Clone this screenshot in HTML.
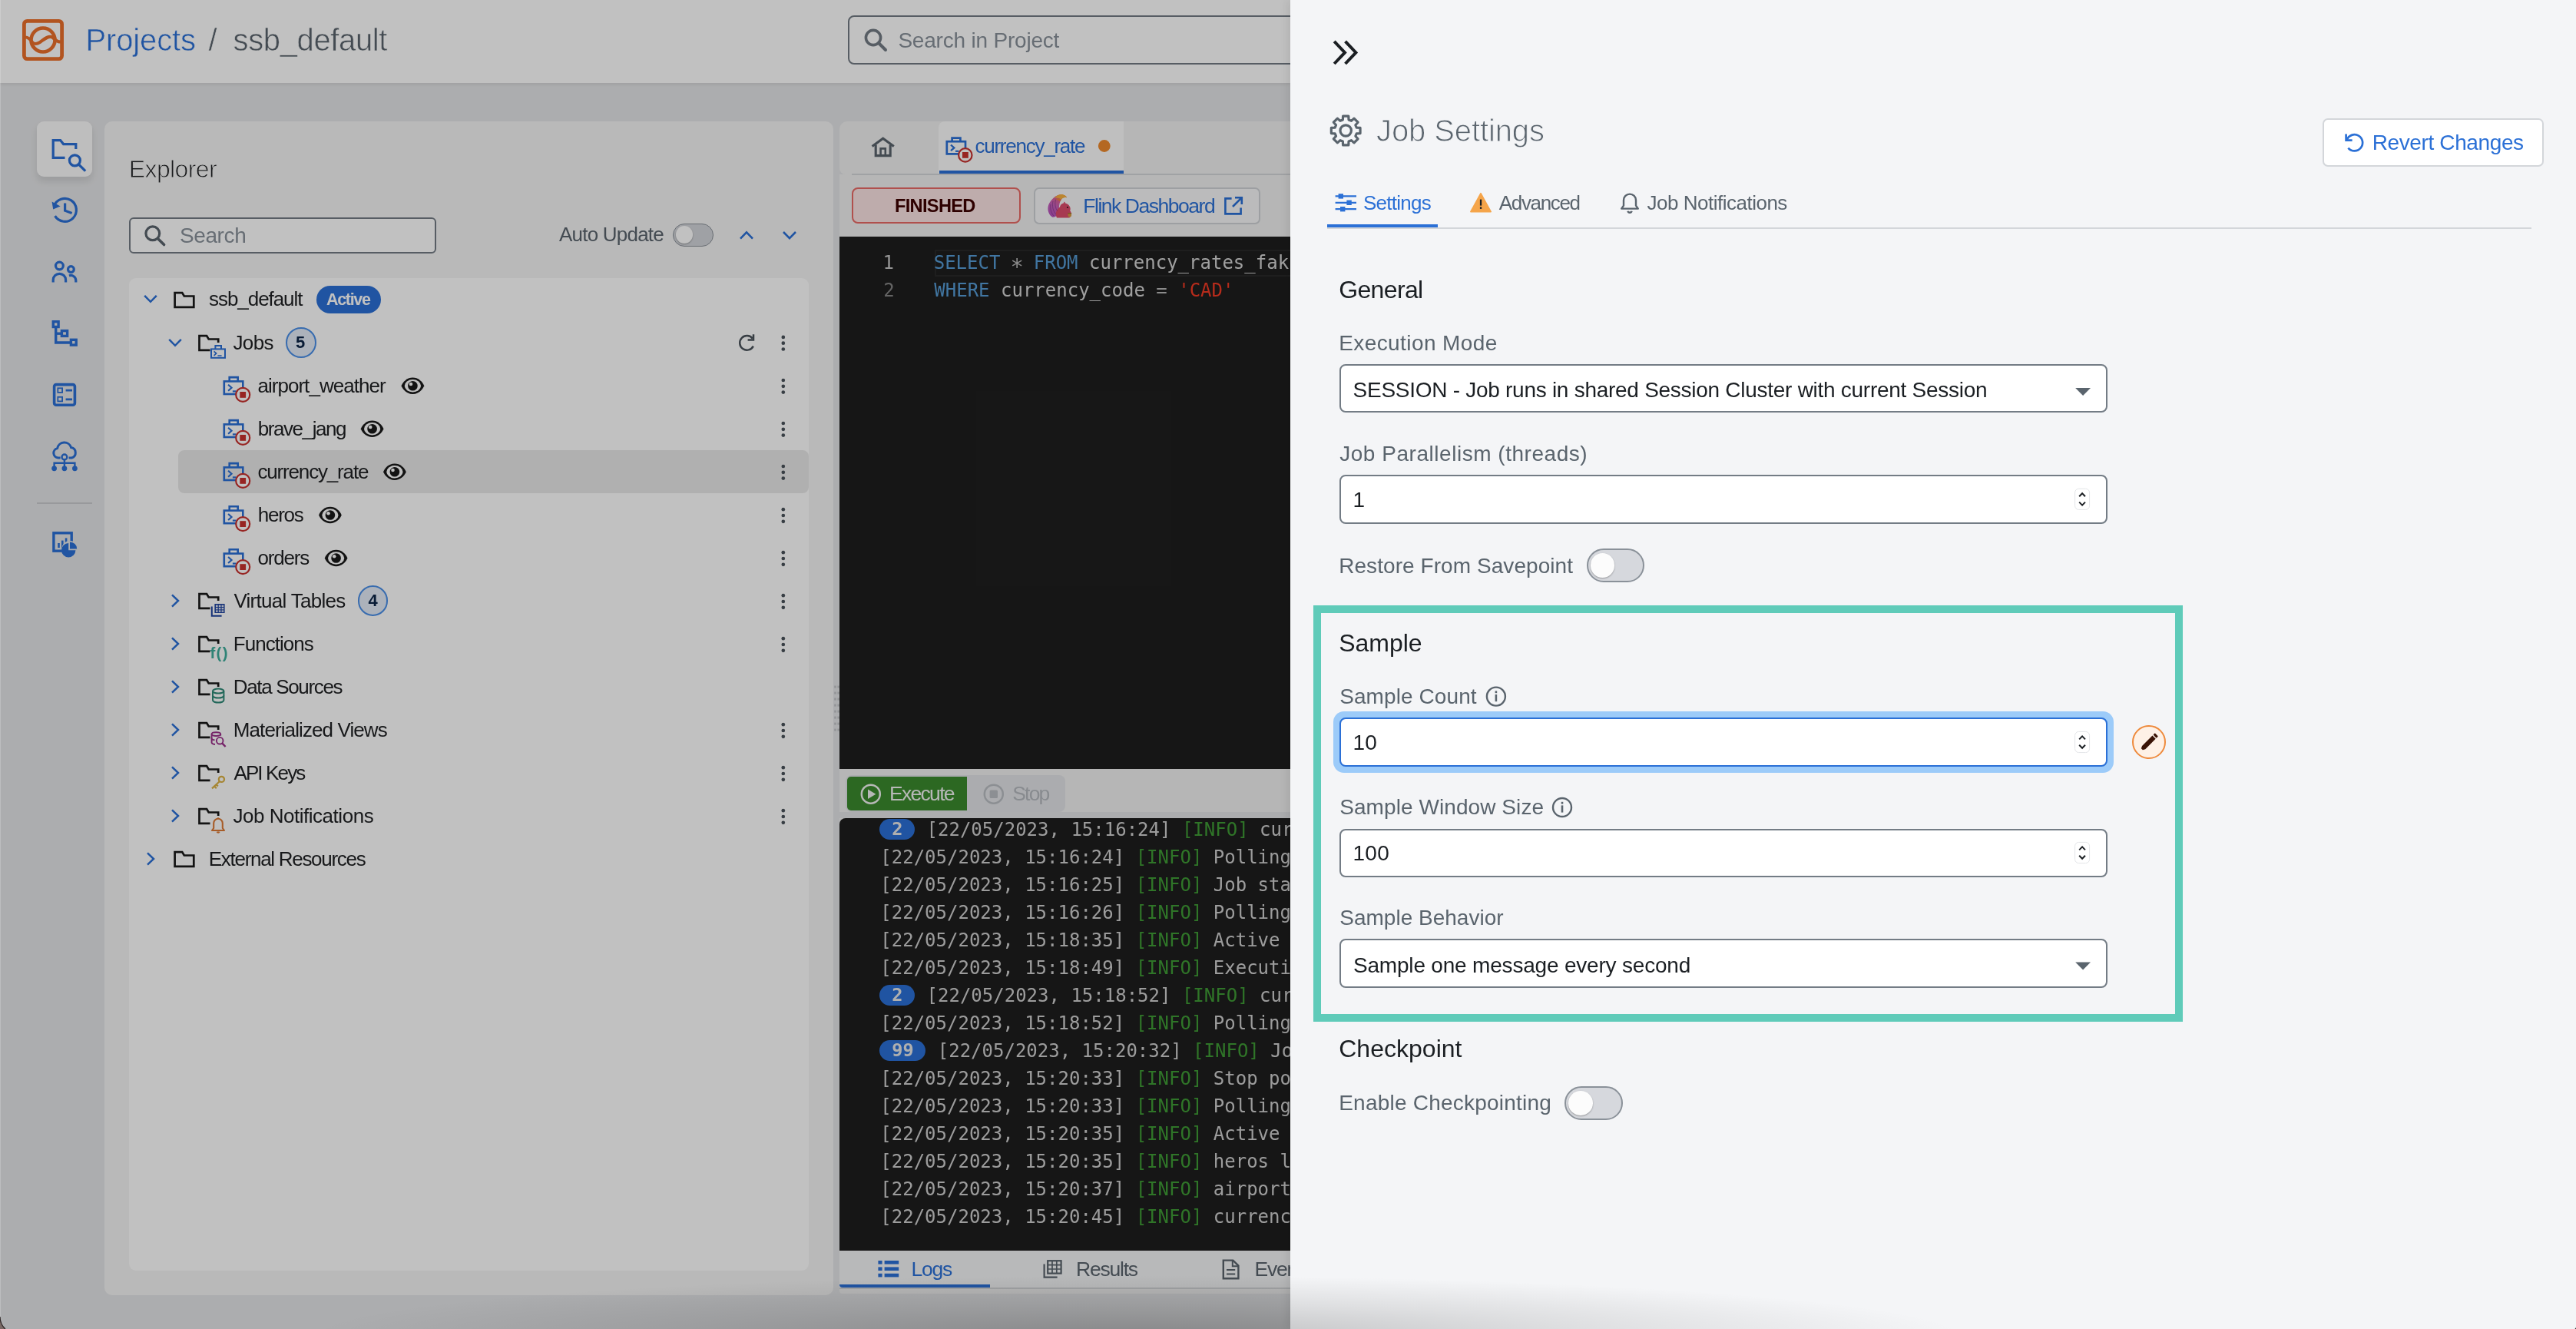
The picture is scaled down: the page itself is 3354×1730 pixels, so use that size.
<!DOCTYPE html>
<html lang="en"><head><meta charset="utf-8"><title>Job Settings</title>
<style>
*{box-sizing:border-box;margin:0;padding:0}
html,body{width:3354px;height:1730px;overflow:hidden;background:#e4e5e7;font-family:"Liberation Sans", sans-serif;}
.t{position:absolute;white-space:pre;display:block}
.m{font-family:"DejaVu Sans Mono", "Liberation Mono", monospace}
#app{position:absolute;left:0;top:0;width:3354px;height:1730px;overflow:hidden;will-change:transform}
#left{position:absolute;left:0;top:0;width:1680px;height:1730px;overflow:hidden;background:#e4e5e7}
#dim{position:absolute;left:0;top:0;width:1680px;height:1730px;background:rgba(0,0,0,0.245)}
#right{position:absolute;left:0;top:0;width:3354px;height:1730px}
</style></head>
<body><div id="app">
<div id="left">
<div style="position:absolute;left:0px;top:0px;width:1680px;height:108px;background:#fff;box-shadow:0 2px 4px rgba(0,0,0,0.08);"></div>
<svg style="position:absolute;left:29px;top:25px;overflow:visible;" width="54" height="54" viewBox="0 0 54 54"><rect x="2.4" y="2.4" width="49.2" height="49.2" rx="4" fill="none" stroke="#ec702b" stroke-width="4.8"/>
<circle cx="27" cy="27" r="15.5" fill="none" stroke="#ec702b" stroke-width="4.6"/>
<path d="M4 23.5 C9 23.5 11 27 13 30 C15 32.5 19 32.5 23 30 C28 26.5 33 21.5 38 23 C42 24.5 43 29.5 50 29.5" fill="none" stroke="#ec702b" stroke-width="4.2" stroke-linecap="round"/></svg>
<span id="h_proj" class="t" style="left:111.60px;top:32.14px;font-size:40px;line-height:40px;color:#2b70d6;letter-spacing:-0.157px;-webkit-text-stroke:0.6px #fff;">Projects</span>
<span id="h_slash" class="t" style="left:271.40px;top:32.14px;font-size:40px;line-height:40px;color:#5a646d;-webkit-text-stroke:0.6px #fff;">/</span>
<span id="h_ssb" class="t" style="left:303.60px;top:32.14px;font-size:40px;line-height:40px;color:#5a646d;letter-spacing:-0.380px;-webkit-text-stroke:0.6px #fff;">ssb_default</span>
<div style="position:absolute;left:1104px;top:20px;width:700px;height:64px;border:2px solid #737c85;border-radius:8px;background:#fff;"></div>
<svg style="position:absolute;left:1124px;top:36px;overflow:visible;" width="32" height="32" viewBox="0 0 32 32"><circle cx="13" cy="13" r="9.6" fill="none" stroke="#737c85" stroke-width="3.6"/><path d="M20 20 L29 29" stroke="#737c85" stroke-width="4" stroke-linecap="round"/></svg>
<span id="h_search" class="t" style="left:1169.40px;top:39.12px;font-size:28px;line-height:28px;color:#88919a;letter-spacing:-0.201px;">Search in Project</span>
<div style="position:absolute;left:48px;top:158px;width:72px;height:72px;background:#fbfbfc;border-radius:9px;box-shadow:0 6px 10px rgba(0,0,0,0.10);"></div>
<svg style="position:absolute;left:0px;top:0px;overflow:visible;" width="1" height="1" viewBox="0 0 1 1"><g fill="none" stroke="#2b70d6" stroke-width="3.2">
<path d="M84.5 205.4 H69.2 V182.6 H78.6 L82.6 187.6 H98.8 V194"/>
<circle cx="97.4" cy="208.8" r="7"/><path d="M102.4 214 L111.2 222.6"/></g></svg>
<svg style="position:absolute;left:0px;top:0px;overflow:visible;" width="1" height="1" viewBox="0 0 1 1"><g fill="none" stroke="#2b70d6" stroke-width="3.2">
<path d="M70.2 268.5 A15 15 0 1 1 71.6 281.2"/>
<path d="M84.6 264.6 V274.2 L93.6 277.6"/></g>
<path d="M67.6 262.5 L69.2 272.6 L78.6 268.4 Z" fill="#2b70d6"/></svg>
<svg style="position:absolute;left:0px;top:0px;overflow:visible;" width="1" height="1" viewBox="0 0 1 1"><g fill="none" stroke="#2b70d6" stroke-width="3.2">
<circle cx="77.4" cy="346" r="4.9"/>
<path d="M69.2 367.6 V364.5 A8.2 8.2 0 0 1 85.6 364.5 V367.6"/>
<circle cx="92.4" cy="350.6" r="3.9"/>
<path d="M90 358.9 A6.6 6.6 0 0 1 98.8 365.2 V367.6"/></g></svg>
<svg style="position:absolute;left:0px;top:0px;overflow:visible;" width="1" height="1" viewBox="0 0 1 1"><g fill="none" stroke="#2b70d6" stroke-width="3.4">
<rect x="69.3" y="418.7" width="6.8" height="6.8"/>
<rect x="80.4" y="430.6" width="7.2" height="6.8"/>
<rect x="92.4" y="442.3" width="6.8" height="6.8"/>
<path d="M72.7 427 V446 H91"/><path d="M72.7 434.2 H79"/></g></svg>
<svg style="position:absolute;left:0px;top:0px;overflow:visible;" width="1" height="1" viewBox="0 0 1 1"><g fill="none" stroke="#2b70d6">
<rect x="70.6" y="500.6" width="26.8" height="26.6" rx="2.5" stroke-width="3.6"/>
<rect x="75.3" y="505.3" width="5.8" height="5.6" stroke-width="1.8"/>
<rect x="75.3" y="516.8" width="5.8" height="5.6" stroke-width="1.8"/>
<path d="M85.6 508.2 H94 M85.6 519.8 H94" stroke-width="2.8"/></g></svg>
<svg style="position:absolute;left:0px;top:0px;overflow:visible;" width="1" height="1" viewBox="0 0 1 1"><g fill="none" stroke="#2b70d6" stroke-width="3">
<path d="M78.6 596 H75.6 A6.3 6.3 0 0 1 74.6 583.6 A9.3 9.3 0 0 1 92.6 582.6 A6.9 6.9 0 0 1 93.4 596 H89.6"/>
<circle cx="83.9" cy="594.9" r="3.4" stroke-width="2.4"/>
<path d="M83.9 598.6 V608 M70.6 608 V602.7 H97.4 V608" stroke-width="2.4"/></g>
<g fill="#2b70d6"><circle cx="70.6" cy="609.8" r="3.4"/><circle cx="83.9" cy="609.8" r="3.4"/><circle cx="97.4" cy="609.8" r="3.4"/></g></svg>
<div style="position:absolute;left:48px;top:654px;width:72px;height:2px;background:#c9cbce;"></div>
<svg style="position:absolute;left:0px;top:0px;overflow:visible;" width="1" height="1" viewBox="0 0 1 1"><rect x="69.9" y="693.8" width="23.3" height="23.4" fill="none" stroke="#2b70d6" stroke-width="3.4"/>
<g fill="#2b70d6"><rect x="75.2" y="707" width="2.6" height="6"/><rect x="80" y="703.6" width="2.6" height="9.4"/><rect x="84.8" y="700.4" width="2.6" height="8"/>
<circle cx="91" cy="714.6" r="10.6" fill="#e4e5e7"/>
<path d="M91 714.6 V705.4 A9.2 9.2 0 0 1 100.2 714.6 Z"/>
<path d="M89.2 716.2 V707 A9.2 9.2 0 1 0 98.4 716.2 Z"/></g></svg>
<div style="position:absolute;left:135.6px;top:158px;width:949.4px;height:1528px;background:#f5f5f5;border-radius:10px;"></div>
<span id="ex_title" class="t" style="left:167.80px;top:203.81px;font-size:32px;line-height:32px;color:#202224;letter-spacing:-0.614px;-webkit-text-stroke:0.9px #f5f5f5;">Explorer</span>
<div style="position:absolute;left:168px;top:283px;width:400px;height:46.5px;border:2px solid #737c85;border-radius:6px;background:#fff;"></div>
<svg style="position:absolute;left:186px;top:291px;overflow:visible;" width="32" height="32" viewBox="0 0 32 32"><circle cx="12.8" cy="12.8" r="8.9" fill="none" stroke="#5a646d" stroke-width="3.2"/><path d="M19.4 19.4 L27.6 27.6" stroke="#5a646d" stroke-width="3.6" stroke-linecap="round"/></svg>
<span id="ex_search" class="t" style="left:234.00px;top:292.62px;font-size:28px;line-height:28px;color:#88919a;letter-spacing:-0.400px;">Search</span>
<span id="ex_auto" class="t" style="left:728.00px;top:292.30px;font-size:26px;line-height:26px;color:#5a646d;letter-spacing:-0.780px;">Auto Update</span>
<div style="position:absolute;left:876.4px;top:290.8px;width:52.8px;height:30px;border-radius:16px;background:#d3d5da;border:1.6px solid #8a9199;"></div>
<div style="position:absolute;left:879.8px;top:294.4px;width:22.6px;height:22.6px;border-radius:50%;background:#fff;box-shadow:0 1px 2px rgba(0,0,0,0.3);"></div>
<svg style="position:absolute;left:0px;top:0px;overflow:visible;" width="1" height="1" viewBox="0 0 1 1"><g fill="none" stroke="#2b70d6" stroke-width="2.6"><path d="M964 310.6 L972 302.4 L980 310.6"/><path d="M1020 302 L1028 310.2 L1036 302"/></g></svg>
<div style="position:absolute;left:168px;top:362px;width:885px;height:1292px;background:#fff;border-radius:9px;"></div>
<div style="position:absolute;left:232px;top:586px;width:820.5px;height:55.5px;background:#e9e9e9;border-radius:8px;"></div>
<span id="t_ssb" class="t" style="left:272.00px;top:376.30px;font-size:26px;line-height:26px;color:#202224;letter-spacing:-1.050px;">ssb_default</span>
<div style="position:absolute;left:412px;top:372px;width:84px;height:36.2px;background:#2b70d6;border-radius:19px;"></div>
<span id="t_active" class="t" style="left:425.00px;top:379.50px;font-size:21.5px;line-height:21.5px;color:#fff;font-weight:700;letter-spacing:-1.320px;">Active</span>
<span id="t_jobs" class="t" style="left:303.40px;top:433.00px;font-size:26px;line-height:26px;color:#202224;letter-spacing:-0.600px;">Jobs</span>
<div style="position:absolute;left:372.3px;top:426.3px;width:39.8px;height:39.8px;border:2.4px solid #4a8fe8;border-radius:50%;background:#e3ebf7;"></div><span id="b5" class="t" style="left:385.00px;top:435.45px;font-size:22px;line-height:22px;color:#0b2447;font-weight:700;">5</span>
<span id="t_job0" class="t" style="left:335.40px;top:489.10px;font-size:26px;line-height:26px;color:#202224;letter-spacing:-0.957px;">airport_weather</span>
<span id="t_job1" class="t" style="left:335.80px;top:545.10px;font-size:26px;line-height:26px;color:#202224;letter-spacing:-1.444px;">brave_jang</span>
<span id="t_job2" class="t" style="left:335.40px;top:601.10px;font-size:26px;line-height:26px;color:#202224;letter-spacing:-1.159px;">currency_rate</span>
<span id="t_job3" class="t" style="left:335.80px;top:657.30px;font-size:26px;line-height:26px;color:#202224;letter-spacing:-1.275px;">heros</span>
<span id="t_job4" class="t" style="left:335.40px;top:713.30px;font-size:26px;line-height:26px;color:#202224;letter-spacing:-1.160px;">orders</span>
<span id="t_f0" class="t" style="left:304.40px;top:769.30px;font-size:26px;line-height:26px;color:#202224;letter-spacing:-0.716px;">Virtual Tables</span>
<span id="t_f1" class="t" style="left:303.80px;top:825.30px;font-size:26px;line-height:26px;color:#202224;letter-spacing:-0.975px;">Functions</span>
<span id="t_f2" class="t" style="left:303.80px;top:881.30px;font-size:26px;line-height:26px;color:#202224;letter-spacing:-1.346px;">Data Sources</span>
<span id="t_f3" class="t" style="left:303.80px;top:937.30px;font-size:26px;line-height:26px;color:#202224;letter-spacing:-0.906px;">Materialized Views</span>
<span id="t_f4" class="t" style="left:304.40px;top:993.30px;font-size:26px;line-height:26px;color:#202224;letter-spacing:-1.857px;">API Keys</span>
<span id="t_f5" class="t" style="left:303.40px;top:1049.30px;font-size:26px;line-height:26px;color:#202224;letter-spacing:-0.469px;">Job Notifications</span>
<div style="position:absolute;left:465.70000000000005px;top:762.3000000000001px;width:39.8px;height:39.8px;border:2.4px solid #4a8fe8;border-radius:50%;background:#e3ebf7;"></div><span id="b4" class="t" style="left:479.40px;top:771.45px;font-size:22px;line-height:22px;color:#0b2447;font-weight:700;">4</span>
<span id="ic_fn" class="t" style="left:273.40px;top:840.05px;font-size:20.5px;line-height:20.5px;color:#3fae9c;font-weight:700;letter-spacing:1.300px;font-style:normal;">f()</span>
<span id="t_ext" class="t" style="left:271.80px;top:1105.30px;font-size:26px;line-height:26px;color:#202224;letter-spacing:-1.294px;">External Resources</span>
<svg style="position:absolute;left:0px;top:0px;overflow:visible;" width="1" height="1" viewBox="0 0 1 1"><path d="M188.2 384.8 L196 392.8 L203.8 384.8" fill="none" stroke="#2b70d6" stroke-width="2.5"/><path d="M227.60000000000002 381.1 H237.20000000000002 L239.8 385.5 H252.3 V399.8 H227.60000000000002 Z" fill="none" stroke="#1a1a1a" stroke-width="2.7"/><path d="M220.2 441.8 L228 449.8 L235.8 441.8" fill="none" stroke="#2b70d6" stroke-width="2.5"/><path d="M273.5 455.8 H259.5 V437.1 H269.1 L271.7 441.5 H284.2 V446.1" fill="none" stroke="#1a1a1a" stroke-width="2.7"/><g fill="none" stroke="#2b70d6" stroke-width="2"><rect x="275" y="454.4" width="18" height="11.4"/><path d="M280.4 454.4 V450 H288 V454.4"/><path d="M278.6 457.4 L281.6 460.1 L278.6 462.8 M283.4 463 H288.6" stroke-width="1.7"/></g><g transform="translate(-0.8 1)"><path d="M980.6 439.6 A9.3 9.3 0 1 0 981.6 449.6" fill="none" stroke="#4a535b" stroke-width="2.5"/><path d="M974.4 441.6 H981.8 V434.2" fill="none" stroke="#4a535b" stroke-width="2.5"/></g><circle cx="1019.8" cy="438.9" r="2.35" fill="#4a535b"/><circle cx="1019.8" cy="446.7" r="2.35" fill="#4a535b"/><circle cx="1019.8" cy="454.5" r="2.35" fill="#4a535b"/><g fill="none" stroke="#2b70d6" stroke-width="2.6"><rect x="291.8" y="496.40000000000003" width="24.5" height="16.6"/>
<path d="M298.7 496.40000000000003 V491.1 H309.7 V496.40000000000003"/><path d="M297.1 500.8 L301.5 504.8 L297.1 508.8" stroke-width="2.2"/><path d="M302.9 509.40000000000003 H307.5" stroke-width="2.2"/></g>
<circle cx="316.2" cy="513.9" r="9" fill="#fff" stroke="#c8322f" stroke-width="2.2"/><rect x="312.3" y="510.0" width="7.8" height="7.8" fill="#c8322f"/><g transform="translate(522.4,491.40000000000003)"><path d="M15 0.2 C8 0.2 2.6 5 0.2 10.9 C2.6 16.8 8 21.6 15 21.6 C22 21.6 27.4 16.8 29.8 10.9 C27.4 5 22 0.2 15 0.2 Z" fill="#1a1a1a"/>
<ellipse cx="15" cy="10.9" rx="10.6" ry="8.2" fill="#fff"/><circle cx="15" cy="10.9" r="6.3" fill="#1a1a1a"/><circle cx="12.6" cy="8.6" r="2.3" fill="#fff"/></g><circle cx="1019.8" cy="495.0" r="2.35" fill="#4a535b"/><circle cx="1019.8" cy="502.8" r="2.35" fill="#4a535b"/><circle cx="1019.8" cy="510.6" r="2.35" fill="#4a535b"/><g fill="none" stroke="#2b70d6" stroke-width="2.6"><rect x="291.8" y="552.4" width="24.5" height="16.6"/>
<path d="M298.7 552.4 V547.0999999999999 H309.7 V552.4"/><path d="M297.1 556.8 L301.5 560.8 L297.1 564.8" stroke-width="2.2"/><path d="M302.9 565.4 H307.5" stroke-width="2.2"/></g>
<circle cx="316.2" cy="569.9" r="9" fill="#fff" stroke="#c8322f" stroke-width="2.2"/><rect x="312.3" y="566.0" width="7.8" height="7.8" fill="#c8322f"/><g transform="translate(469.6,547.4)"><path d="M15 0.2 C8 0.2 2.6 5 0.2 10.9 C2.6 16.8 8 21.6 15 21.6 C22 21.6 27.4 16.8 29.8 10.9 C27.4 5 22 0.2 15 0.2 Z" fill="#1a1a1a"/>
<ellipse cx="15" cy="10.9" rx="10.6" ry="8.2" fill="#fff"/><circle cx="15" cy="10.9" r="6.3" fill="#1a1a1a"/><circle cx="12.6" cy="8.6" r="2.3" fill="#fff"/></g><circle cx="1019.8" cy="551.0" r="2.35" fill="#4a535b"/><circle cx="1019.8" cy="558.8" r="2.35" fill="#4a535b"/><circle cx="1019.8" cy="566.5999999999999" r="2.35" fill="#4a535b"/><g fill="none" stroke="#2b70d6" stroke-width="2.6"><rect x="291.8" y="608.4" width="24.5" height="16.6"/>
<path d="M298.7 608.4 V603.0999999999999 H309.7 V608.4"/><path d="M297.1 612.8 L301.5 616.8 L297.1 620.8" stroke-width="2.2"/><path d="M302.9 621.4 H307.5" stroke-width="2.2"/></g>
<circle cx="316.2" cy="625.9" r="9" fill="#fff" stroke="#c8322f" stroke-width="2.2"/><rect x="312.3" y="622.0" width="7.8" height="7.8" fill="#c8322f"/><g transform="translate(498.9,603.4)"><path d="M15 0.2 C8 0.2 2.6 5 0.2 10.9 C2.6 16.8 8 21.6 15 21.6 C22 21.6 27.4 16.8 29.8 10.9 C27.4 5 22 0.2 15 0.2 Z" fill="#1a1a1a"/>
<ellipse cx="15" cy="10.9" rx="10.6" ry="8.2" fill="#fff"/><circle cx="15" cy="10.9" r="6.3" fill="#1a1a1a"/><circle cx="12.6" cy="8.6" r="2.3" fill="#fff"/></g><circle cx="1019.8" cy="607.0" r="2.35" fill="#4a535b"/><circle cx="1019.8" cy="614.8" r="2.35" fill="#4a535b"/><circle cx="1019.8" cy="622.5999999999999" r="2.35" fill="#4a535b"/><g fill="none" stroke="#2b70d6" stroke-width="2.6"><rect x="291.8" y="664.6" width="24.5" height="16.6"/>
<path d="M298.7 664.6 V659.3 H309.7 V664.6"/><path d="M297.1 669 L301.5 673 L297.1 677" stroke-width="2.2"/><path d="M302.9 677.6 H307.5" stroke-width="2.2"/></g>
<circle cx="316.2" cy="682.1" r="9" fill="#fff" stroke="#c8322f" stroke-width="2.2"/><rect x="312.3" y="678.2" width="7.8" height="7.8" fill="#c8322f"/><g transform="translate(414.90000000000003,659.6)"><path d="M15 0.2 C8 0.2 2.6 5 0.2 10.9 C2.6 16.8 8 21.6 15 21.6 C22 21.6 27.4 16.8 29.8 10.9 C27.4 5 22 0.2 15 0.2 Z" fill="#1a1a1a"/>
<ellipse cx="15" cy="10.9" rx="10.6" ry="8.2" fill="#fff"/><circle cx="15" cy="10.9" r="6.3" fill="#1a1a1a"/><circle cx="12.6" cy="8.6" r="2.3" fill="#fff"/></g><circle cx="1019.8" cy="663.2" r="2.35" fill="#4a535b"/><circle cx="1019.8" cy="671" r="2.35" fill="#4a535b"/><circle cx="1019.8" cy="678.8" r="2.35" fill="#4a535b"/><g fill="none" stroke="#2b70d6" stroke-width="2.6"><rect x="291.8" y="720.6" width="24.5" height="16.6"/>
<path d="M298.7 720.6 V715.3 H309.7 V720.6"/><path d="M297.1 725 L301.5 729 L297.1 733" stroke-width="2.2"/><path d="M302.9 733.6 H307.5" stroke-width="2.2"/></g>
<circle cx="316.2" cy="738.1" r="9" fill="#fff" stroke="#c8322f" stroke-width="2.2"/><rect x="312.3" y="734.2" width="7.8" height="7.8" fill="#c8322f"/><g transform="translate(422.6,715.6)"><path d="M15 0.2 C8 0.2 2.6 5 0.2 10.9 C2.6 16.8 8 21.6 15 21.6 C22 21.6 27.4 16.8 29.8 10.9 C27.4 5 22 0.2 15 0.2 Z" fill="#1a1a1a"/>
<ellipse cx="15" cy="10.9" rx="10.6" ry="8.2" fill="#fff"/><circle cx="15" cy="10.9" r="6.3" fill="#1a1a1a"/><circle cx="12.6" cy="8.6" r="2.3" fill="#fff"/></g><circle cx="1019.8" cy="719.2" r="2.35" fill="#4a535b"/><circle cx="1019.8" cy="727" r="2.35" fill="#4a535b"/><circle cx="1019.8" cy="734.8" r="2.35" fill="#4a535b"/><path d="M224 774.4 L232 782 L224 789.6" fill="none" stroke="#2b70d6" stroke-width="2.5"/><path d="M273.5 791.8000000000001 H259.5 V773.1 H269.1 L271.7 777.5 H284.2 V782.1" fill="none" stroke="#1a1a1a" stroke-width="2.7"/><circle cx="1019.8" cy="775.2" r="2.35" fill="#4a535b"/><circle cx="1019.8" cy="783" r="2.35" fill="#4a535b"/><circle cx="1019.8" cy="790.8" r="2.35" fill="#4a535b"/><path d="M224 830.4 L232 838 L224 845.6" fill="none" stroke="#2b70d6" stroke-width="2.5"/><path d="M273.5 847.8000000000001 H259.5 V829.1 H269.1 L271.7 833.5 H284.2 V838.1" fill="none" stroke="#1a1a1a" stroke-width="2.7"/><circle cx="1019.8" cy="831.2" r="2.35" fill="#4a535b"/><circle cx="1019.8" cy="839" r="2.35" fill="#4a535b"/><circle cx="1019.8" cy="846.8" r="2.35" fill="#4a535b"/><path d="M224 886.4 L232 894 L224 901.6" fill="none" stroke="#2b70d6" stroke-width="2.5"/><path d="M273.5 903.8000000000001 H259.5 V885.1 H269.1 L271.7 889.5 H284.2 V894.1" fill="none" stroke="#1a1a1a" stroke-width="2.7"/><path d="M224 942.4 L232 950 L224 957.6" fill="none" stroke="#2b70d6" stroke-width="2.5"/><path d="M273.5 959.8000000000001 H259.5 V941.1 H269.1 L271.7 945.5 H284.2 V950.1" fill="none" stroke="#1a1a1a" stroke-width="2.7"/><circle cx="1019.8" cy="943.2" r="2.35" fill="#4a535b"/><circle cx="1019.8" cy="951" r="2.35" fill="#4a535b"/><circle cx="1019.8" cy="958.8" r="2.35" fill="#4a535b"/><path d="M224 998.4 L232 1006 L224 1013.6" fill="none" stroke="#2b70d6" stroke-width="2.5"/><path d="M273.5 1015.8000000000001 H259.5 V997.1 H269.1 L271.7 1001.5 H284.2 V1006.1" fill="none" stroke="#1a1a1a" stroke-width="2.7"/><circle cx="1019.8" cy="999.2" r="2.35" fill="#4a535b"/><circle cx="1019.8" cy="1007" r="2.35" fill="#4a535b"/><circle cx="1019.8" cy="1014.8" r="2.35" fill="#4a535b"/><path d="M224 1054.4 L232 1062 L224 1069.6" fill="none" stroke="#2b70d6" stroke-width="2.5"/><path d="M273.5 1071.8 H259.5 V1053.1 H269.1 L271.7 1057.5 H284.2 V1062.1" fill="none" stroke="#1a1a1a" stroke-width="2.7"/><circle cx="1019.8" cy="1055.2" r="2.35" fill="#4a535b"/><circle cx="1019.8" cy="1063" r="2.35" fill="#4a535b"/><circle cx="1019.8" cy="1070.8" r="2.35" fill="#4a535b"/><g><path d="M275.8 789.6 V801.8 H288.6" fill="none" stroke="#1f44a0" stroke-width="2"/><rect x="279.4" y="786" width="13.2" height="12" fill="#1f44a0"/>
<g fill="#dfe3ee"><rect x="281" y="787.6" width="2.6" height="2.4"/><rect x="284.8" y="787.6" width="2.6" height="2.4"/><rect x="288.6" y="787.6" width="2.6" height="2.4"/>
<rect x="281" y="791" width="2.6" height="2.4"/><rect x="284.8" y="791" width="2.6" height="2.4"/><rect x="288.6" y="791" width="2.6" height="2.4"/>
<rect x="281" y="794.4" width="2.6" height="2.4"/><rect x="284.8" y="794.4" width="2.6" height="2.4"/><rect x="288.6" y="794.4" width="2.6" height="2.4"/></g></g><g fill="none" stroke="#2f8a78" stroke-width="2"><ellipse cx="284.2" cy="899.6" rx="7.2" ry="3"/><path d="M277 899.6 V911.6 A7.2 3 0 0 0 291.4 911.6 V899.6"/><path d="M277 905.6 A7.2 3 0 0 0 291.4 905.6"/></g><g fill="none" stroke="#9b2f8a" stroke-width="1.9"><ellipse cx="281.4" cy="955.6" rx="5.8" ry="2.4"/><path d="M275.6 955.6 V966.6 C275.6 968 277.6 968.8 280 969"/><path d="M275.6 961.2 C275.6 962.4 277.4 963.2 279.6 963.4"/><path d="M287.2 955.6 V957.6"/>
<circle cx="286.2" cy="964.2" r="4.3"/><path d="M289.4 967.6 L293.6 972" stroke-width="2.4"/></g><g fill="none" stroke="#dcb244" stroke-width="2.2"><circle cx="288.4" cy="1014.4" r="3.6"/><path d="M285.8 1017.2 L276 1026.4 M279.2 1023.4 L281.8 1026.2 M281.6 1021.2 L283.8 1023.6"/></g><g fill="none" stroke="#dd7a35" stroke-width="2.1"><path d="M276 1081 H292 L289.8 1078 V1071.6 A5.8 5.8 0 0 0 278.2 1071.6 V1078 Z" stroke-linejoin="round"/><path d="M282.6 1082.6 A1.6 1.6 0 0 0 285.6 1082.6"/><path d="M284 1065.8 V1064.4"/></g><path d="M192 1110.4 L200 1118 L192 1125.6" fill="none" stroke="#2b70d6" stroke-width="2.5"/><path d="M227.60000000000002 1109.1 H237.20000000000002 L239.8 1113.5 H252.3 V1127.8 H227.60000000000002 Z" fill="none" stroke="#1a1a1a" stroke-width="2.7"/></svg>
<svg style="position:absolute;left:0px;top:0px;overflow:visible;" width="1" height="1" viewBox="0 0 1 1"><rect x="1086.2" y="892.6" width="2.6" height="3" fill="#c3c5c8"/><rect x="1086.2" y="900.6" width="2.6" height="3" fill="#c3c5c8"/><rect x="1086.2" y="908.6" width="2.6" height="3" fill="#c3c5c8"/><rect x="1086.2" y="916.6" width="2.6" height="3" fill="#c3c5c8"/><rect x="1086.2" y="924.6" width="2.6" height="3" fill="#c3c5c8"/><rect x="1086.2" y="932.6" width="2.6" height="3" fill="#c3c5c8"/><rect x="1086.2" y="940.6" width="2.6" height="3" fill="#c3c5c8"/><rect x="1086.2" y="948.6" width="2.6" height="3" fill="#c3c5c8"/><rect x="1090.4" y="892.6" width="2.6" height="3" fill="#c3c5c8"/><rect x="1090.4" y="900.6" width="2.6" height="3" fill="#c3c5c8"/><rect x="1090.4" y="908.6" width="2.6" height="3" fill="#c3c5c8"/><rect x="1090.4" y="916.6" width="2.6" height="3" fill="#c3c5c8"/><rect x="1090.4" y="924.6" width="2.6" height="3" fill="#c3c5c8"/><rect x="1090.4" y="932.6" width="2.6" height="3" fill="#c3c5c8"/><rect x="1090.4" y="940.6" width="2.6" height="3" fill="#c3c5c8"/><rect x="1090.4" y="948.6" width="2.6" height="3" fill="#c3c5c8"/></svg>
<div style="position:absolute;left:1093px;top:158px;width:600px;height:69px;background:#f1f1f1;border-radius:10px 0 0 8px;"></div>
<div style="position:absolute;left:1093px;top:227px;width:600px;height:1457px;background:#f1f1f1;border-radius:0 0 0 4px;"></div>
<div style="position:absolute;left:1222px;top:158px;width:241px;height:68px;background:#fdfdfd;border-radius:8px 0 0 0;"></div>
<div style="position:absolute;left:1109px;top:225.6px;width:600px;height:2px;background:#d4d6d9;"></div>
<div style="position:absolute;left:1222.6px;top:221.8px;width:240px;height:4.2px;background:#2b70d6;"></div>
<svg style="position:absolute;left:0px;top:0px;overflow:visible;" width="1" height="1" viewBox="0 0 1 1"><g fill="none" stroke="#5a646d" stroke-width="3.1"><path d="M1135.6 190.6 L1149.7 180.2 L1163.8 190.6"/><path d="M1140.2 188.4 V202.6 H1159.2 V188.4"/><path d="M1146.6 202.6 V193.4 H1152.8 V202.6" stroke-width="2.6"/></g></svg>
<svg style="position:absolute;left:0px;top:0px;overflow:visible;" width="1" height="1" viewBox="0 0 1 1"><g fill="none" stroke="#2b70d6" stroke-width="2.7"><rect x="1232.8" y="184.2" width="24.2" height="16.2"/><path d="M1239.6 184.2 V179.6 H1250.4 V184.2"/><path d="M1238 188.6 L1242.4 192.4 L1238 196.2" stroke-width="2.2"/><path d="M1244 196.8 H1248.4" stroke-width="2.2"/></g>
<circle cx="1256.8" cy="201.9" r="8.7" fill="#fdfdfd" stroke="#c8322f" stroke-width="2.2"/><rect x="1253" y="198" width="7.8" height="7.8" fill="#c8322f"/>
<circle cx="1437.8" cy="190" r="7.9" fill="#ee8a2e"/></svg>
<span id="ed_tab" class="t" style="left:1269.50px;top:177.30px;font-size:26px;line-height:26px;color:#2b70d6;letter-spacing:-1.250px;">currency_rate</span>
<div style="position:absolute;left:1109.3px;top:244px;width:219.3px;height:47.4px;border:2.4px solid #e96a66;border-radius:8px;background:#fbe4e3;"></div>
<span id="ed_fin" class="t" style="left:1164.90px;top:257.27px;font-size:23.6px;line-height:23.6px;color:#3d0000;font-weight:700;letter-spacing:-0.658px;">FINISHED</span>
<div style="position:absolute;left:1345.5px;top:244px;width:295px;height:48px;border:2px solid #d0d3d7;border-radius:7px;background:#f7f8f9;"></div>
<svg style="position:absolute;left:1362.6px;top:251.6px;overflow:visible;" width="33" height="32.4" viewBox="0 0 33 32.4"><defs><linearGradient id="tl" x1="0" y1="1" x2="0.6" y2="0"><stop offset="0" stop-color="#b04fc0"/><stop offset="0.55" stop-color="#c860b8"/><stop offset="1" stop-color="#e8607a"/></linearGradient></defs>
<path d="M7 30.5 C1.5 27 -0.5 18.5 3.5 12 C6.5 7 11 2.5 16.5 1.5 C21 0.8 24.5 2.6 26 5 C23 4.4 20.4 5.4 18.6 8 C16 12 15.4 18 16.4 24 C14.4 28.6 10.4 31.4 7 30.5 Z" fill="url(#tl)"/>
<path d="M9.6 6 C12.6 2.2 17.4 0.2 21.6 1.4 C24 2.2 25.6 3.8 26.2 5.4 C23.2 4.4 20.6 5.4 18.8 7.8 C15.6 5.6 12.4 5.2 9.6 6 Z" fill="#f7b13f"/>
<path d="M11 7.4 C13.6 5.8 16.4 5.8 18.8 7.8 L17.4 10.2 C15.4 8.4 13.2 7.6 11 7.4 Z" fill="#ee7d43"/>
<path d="M13 31.4 C10.4 27 12 20.4 17 17.6 C17.6 13.4 22.6 11.2 26.6 13.6 C30 15.6 31.6 19.6 30.2 22.6 C32.6 24.6 32.6 29 29.4 31.4 Z" fill="#dd4c6c"/>
<path d="M5 14 C4 19 5.4 25 9 29 M8 10 C6.6 16 8 23 12 27 M11.6 7.6 C10 13 11 19 14 23" fill="none" stroke="#6a2a78" stroke-width="0.9" opacity="0.55"/>
<circle cx="27" cy="18" r="1.1" fill="#3a1420"/><path d="M21.6 13 L22.6 10.4 L24.6 12.4 Z" fill="#dd4c6c"/>
<ellipse cx="29.8" cy="27.8" rx="2.3" ry="2.8" fill="#d79a43"/><path d="M27.4 26.4 H32.2 V25.2 H27.4 Z" fill="#9a6a2a"/></svg>
<span id="ed_flink" class="t" style="left:1410.30px;top:254.75px;font-size:26.5px;line-height:26.5px;color:#2b70d6;letter-spacing:-1.471px;">Flink Dashboard</span>
<svg style="position:absolute;left:0px;top:0px;overflow:visible;" width="1" height="1" viewBox="0 0 1 1"><g fill="none" stroke="#2b70d6" stroke-width="2.6"><path d="M1603.6 258.4 H1595.4 V278.4 H1615.6 V270.4"/><path d="M1608 257.2 H1616.8 V266 M1616.4 257.6 L1605 269"/></g></svg>
<div style="position:absolute;left:1093px;top:308.3px;width:600px;height:692.7px;background:#1e1e1e;"></div>
<div style="position:absolute;left:1217px;top:324.6px;width:480px;height:35.2px;border:2px solid #282828;"></div>
<span id="ed_ln1" class="t m" style="left:1149.60px;top:330.29px;font-size:24px;line-height:24px;color:#c6c6c6;">1</span>
<span id="ed_ln2" class="t m" style="left:1150.20px;top:366.09px;font-size:24px;line-height:24px;color:#858585;">2</span>
<span id="ed_c1" class="t m" style="left:1215.70px;top:330.29px;font-size:24px;line-height:24px;color:#d4d4d4;"><span style="color:#569cd6">SELECT</span> <span style="color:#b8b8b8;display:inline-block;transform:translateY(5.4px) scale(1.2)">*</span> <span style="color:#569cd6">FROM</span> currency_rates_fak</span>
<span id="ed_c2" class="t m" style="left:1216.30px;top:366.09px;font-size:24px;line-height:24px;color:#d4d4d4;"><span style="color:#569cd6">WHERE</span> currency_code <span style="color:#b8b8b8">=</span> <span style="color:#f23a24">'CAD'</span></span>
<div style="position:absolute;left:1093px;top:1001px;width:600px;height:56.2px;background:#f1f1f1;"></div>
<div style="position:absolute;left:1093px;top:1057px;width:600px;height:8.2px;background:#e4e5e7;"></div>
<div style="position:absolute;left:1101.2px;top:1009px;width:285.4px;height:47.6px;background:#e2e4e7;border-radius:8px;"></div>
<div style="position:absolute;left:1103px;top:1010.8px;width:156.2px;height:44.2px;background:#3b8a2e;border-radius:5px 0 0 5px;"></div>
<svg style="position:absolute;left:0px;top:0px;overflow:visible;" width="1" height="1" viewBox="0 0 1 1"><circle cx="1133.8" cy="1033.7" r="12" fill="none" stroke="#f2f4f2" stroke-width="2.5"/><path d="M1130 1027.4 L1140.4 1033.7 L1130 1040 Z" fill="#f2f4f2"/>
<circle cx="1293.8" cy="1033.7" r="12" fill="none" stroke="#b9bdc2" stroke-width="2.5"/><rect x="1288.6" y="1028.5" width="10.4" height="10.4" rx="1.5" fill="#b9bdc2"/></svg>
<span id="ed_exec" class="t" style="left:1158.00px;top:1020.25px;font-size:26.5px;line-height:26.5px;color:#f2f4f2;letter-spacing:-1.700px;">Execute</span>
<span id="ed_stop" class="t" style="left:1318.20px;top:1020.25px;font-size:26.5px;line-height:26.5px;color:#b4b8be;letter-spacing:-1.800px;">Stop</span>
<div style="position:absolute;left:1093px;top:1065.2px;width:600px;height:562.6px;background:#1e1e1e;border-radius:8px 0 0 0;"></div>
<div style="position:absolute;left:1145.2px;top:1066.1999999999998px;width:45.8px;height:27px;background:#2b70d6;border-radius:14px;"></div>
<span id="lg_b0" class="t m" style="left:1161.30px;top:1068.08px;font-size:23.6px;line-height:23.6px;color:#e8e8e8;font-weight:700;">2</span>
<span id="lg_0" class="t m" style="left:1206.55px;top:1067.89px;font-size:24px;line-height:24px;color:#cfcfcf;">[22/05/2023, 15:16:24] <span style="color:#3f9b35">[INFO]</span> cur</span>
<span id="lg_1" class="t m" style="left:1146.30px;top:1103.89px;font-size:24px;line-height:24px;color:#cfcfcf;">[22/05/2023, 15:16:24] <span style="color:#3f9b35">[INFO]</span> Polling</span>
<span id="lg_2" class="t m" style="left:1146.30px;top:1139.89px;font-size:24px;line-height:24px;color:#cfcfcf;">[22/05/2023, 15:16:25] <span style="color:#3f9b35">[INFO]</span> Job sta</span>
<span id="lg_3" class="t m" style="left:1146.30px;top:1175.89px;font-size:24px;line-height:24px;color:#cfcfcf;">[22/05/2023, 15:16:26] <span style="color:#3f9b35">[INFO]</span> Polling</span>
<span id="lg_4" class="t m" style="left:1146.30px;top:1211.89px;font-size:24px;line-height:24px;color:#cfcfcf;">[22/05/2023, 15:18:35] <span style="color:#3f9b35">[INFO]</span> Active </span>
<span id="lg_5" class="t m" style="left:1146.30px;top:1247.89px;font-size:24px;line-height:24px;color:#cfcfcf;">[22/05/2023, 15:18:49] <span style="color:#3f9b35">[INFO]</span> Executi</span>
<div style="position:absolute;left:1145.2px;top:1282.1999999999998px;width:45.8px;height:27px;background:#2b70d6;border-radius:14px;"></div>
<span id="lg_b6" class="t m" style="left:1161.30px;top:1284.08px;font-size:23.6px;line-height:23.6px;color:#e8e8e8;font-weight:700;">2</span>
<span id="lg_6" class="t m" style="left:1206.55px;top:1283.89px;font-size:24px;line-height:24px;color:#cfcfcf;">[22/05/2023, 15:18:52] <span style="color:#3f9b35">[INFO]</span> cur</span>
<span id="lg_7" class="t m" style="left:1146.30px;top:1319.89px;font-size:24px;line-height:24px;color:#cfcfcf;">[22/05/2023, 15:18:52] <span style="color:#3f9b35">[INFO]</span> Polling</span>
<div style="position:absolute;left:1145.2px;top:1354.1999999999998px;width:60px;height:27px;background:#2b70d6;border-radius:14px;"></div>
<span id="lg_b8" class="t m" style="left:1161.20px;top:1356.08px;font-size:23.6px;line-height:23.6px;color:#e8e8e8;font-weight:700;">99</span>
<span id="lg_8" class="t m" style="left:1220.75px;top:1355.89px;font-size:24px;line-height:24px;color:#cfcfcf;">[22/05/2023, 15:20:32] <span style="color:#3f9b35">[INFO]</span> Jo</span>
<span id="lg_9" class="t m" style="left:1146.30px;top:1391.89px;font-size:24px;line-height:24px;color:#cfcfcf;">[22/05/2023, 15:20:33] <span style="color:#3f9b35">[INFO]</span> Stop po</span>
<span id="lg_10" class="t m" style="left:1146.30px;top:1427.89px;font-size:24px;line-height:24px;color:#cfcfcf;">[22/05/2023, 15:20:33] <span style="color:#3f9b35">[INFO]</span> Polling</span>
<span id="lg_11" class="t m" style="left:1146.30px;top:1463.89px;font-size:24px;line-height:24px;color:#cfcfcf;">[22/05/2023, 15:20:35] <span style="color:#3f9b35">[INFO]</span> Active </span>
<span id="lg_12" class="t m" style="left:1146.30px;top:1499.89px;font-size:24px;line-height:24px;color:#cfcfcf;">[22/05/2023, 15:20:35] <span style="color:#3f9b35">[INFO]</span> heros l</span>
<span id="lg_13" class="t m" style="left:1146.30px;top:1535.89px;font-size:24px;line-height:24px;color:#cfcfcf;">[22/05/2023, 15:20:37] <span style="color:#3f9b35">[INFO]</span> airport_</span>
<span id="lg_14" class="t m" style="left:1146.30px;top:1571.89px;font-size:24px;line-height:24px;color:#cfcfcf;">[22/05/2023, 15:20:45] <span style="color:#3f9b35">[INFO]</span> currenc</span>
<div style="position:absolute;left:1093px;top:1627.8px;width:600px;height:50px;background:#f4f5f6;"></div>
<div style="position:absolute;left:1093px;top:1676px;width:600px;height:2px;background:#d4d6d9;"></div>
<div style="position:absolute;left:1093px;top:1672px;width:196px;height:4.4px;background:#2b70d6;border-radius:0 0 0 5px;"></div>
<svg style="position:absolute;left:0px;top:0px;overflow:visible;" width="1" height="1" viewBox="0 0 1 1"><g fill="#2b70d6"><rect x="1143.4" y="1641" width="5.2" height="4.6"/><rect x="1143.4" y="1649.4" width="5.2" height="4.6"/><rect x="1143.4" y="1657.8" width="5.2" height="4.6"/>
<rect x="1151.6" y="1641" width="18.6" height="4.6"/><rect x="1151.6" y="1649.4" width="18.6" height="4.6"/><rect x="1151.6" y="1657.8" width="18.6" height="4.6"/></g>
<g transform="translate(9.6 0)"><g fill="none" stroke="#5a646d" stroke-width="2.2"><path d="M1350 1645.6 V1662.6 H1367"/><rect x="1354.6" y="1641.2" width="17.4" height="16.4"/><path d="M1360.4 1641.2 V1657.6 M1366.2 1641.2 V1657.6 M1354.6 1646.6 H1372 M1354.6 1652 H1372" stroke-width="1.7"/></g></g>
<g fill="none" stroke="#5a646d" stroke-width="2.4"><path d="M1592.8 1640.6 H1605.4 L1612.4 1647.6 V1664.2 H1592.8 Z"/><path d="M1604.8 1641 V1648.2 H1612" stroke-width="2"/><path d="M1597 1653 H1608.2 M1597 1658.6 H1608.2" stroke-width="2"/></g></svg>
<span id="ed_logs" class="t" style="left:1186.50px;top:1638.65px;font-size:26.5px;line-height:26.5px;color:#2b70d6;letter-spacing:-1.234px;">Logs</span>
<span id="ed_res" class="t" style="left:1401.00px;top:1638.65px;font-size:26.5px;line-height:26.5px;color:#5a646d;letter-spacing:-1.217px;">Results</span>
<span id="ed_ev" class="t" style="left:1633.60px;top:1638.65px;font-size:26.5px;line-height:26.5px;color:#5a646d;letter-spacing:-1.220px;">Events</span>
<div id="dim"></div>

</div>
<div id="right">
<div style="position:absolute;left:1680px;top:0px;width:1674px;height:1730px;background:#f4f5f7;box-shadow:-3px 0 12px rgba(0,0,0,0.09);"></div>
<svg style="position:absolute;left:0px;top:0px;overflow:visible;" width="1" height="1" viewBox="0 0 1 1"><g fill="none" stroke="#1b1f23" stroke-width="4"><path d="M1737.2 53.8 L1751 68.4 L1737.2 83"/><path d="M1751.6 53.8 L1765.4 68.4 L1751.6 83"/></g></svg>
<svg style="position:absolute;left:0px;top:0px;overflow:visible;" width="1" height="1" viewBox="0 0 1 1"><path d="M1748.60 151.14 L1755.80 151.14 L1756.05 155.92 L1759.43 157.32 L1762.99 154.12 L1768.08 159.21 L1764.88 162.77 L1766.28 166.15 L1771.06 166.40 L1771.06 173.60 L1766.28 173.85 L1764.88 177.23 L1768.08 180.79 L1762.99 185.88 L1759.43 182.68 L1756.05 184.08 L1755.80 188.86 L1748.60 188.86 L1748.35 184.08 L1744.97 182.68 L1741.41 185.88 L1736.32 180.79 L1739.52 177.23 L1738.12 173.85 L1733.34 173.60 L1733.34 166.40 L1738.12 166.15 L1739.52 162.77 L1736.32 159.21 L1741.41 154.12 L1744.97 157.32 L1748.35 155.92 Z" fill="none" stroke="#5a646d" stroke-width="3.2" stroke-linejoin="round"/><circle cx="1752.2" cy="170" r="7.2" fill="none" stroke="#5a646d" stroke-width="3.2"/></svg>
<span id="r_title" class="t" style="left:1792.00px;top:150.34px;font-size:40px;line-height:40px;color:#5a646d;letter-spacing:-0.108px;-webkit-text-stroke:1.0px #f4f5f7;">Job Settings</span>
<div style="position:absolute;left:3024px;top:154px;width:288px;height:63px;border:2px solid #d3d6da;border-radius:7px;background:#fff;"></div>
<svg style="position:absolute;left:0px;top:0px;overflow:visible;" width="1" height="1" viewBox="0 0 1 1"><g fill="none" stroke="#2b70d6" stroke-width="2.7"><path d="M3055.6 182.2 A10.6 10.6 0 1 1 3057.4 192.6"/><path d="M3054.6 174.6 V182.6 H3062.6"/></g></svg>
<span id="r_revert" class="t" style="left:3088.70px;top:172.22px;font-size:28px;line-height:28px;color:#2b70d6;letter-spacing:-0.377px;">Revert Changes</span>
<div style="position:absolute;left:1728px;top:296px;width:1568px;height:2px;background:#d3d6da;"></div>
<div style="position:absolute;left:1728px;top:292px;width:144px;height:4px;background:#2b70d6;"></div>
<svg style="position:absolute;left:0px;top:0px;overflow:visible;" width="1" height="1" viewBox="0 0 1 1"><g stroke="#2b70d6" stroke-width="2.2"><path d="M1738.6 255.4 H1766 M1738.6 263.8 H1766 M1738.6 272.2 H1766"/></g>
<g fill="#2b70d6"><rect x="1742.6" y="252.2" width="6.4" height="6.4"/><rect x="1753.4" y="260.6" width="6.4" height="6.4"/><rect x="1745" y="269" width="6.4" height="6.4"/></g>
<path d="M1928 251.6 L1941.2 275.6 H1914.8 Z" fill="#f5a54a" stroke="#f5a54a" stroke-width="1.6" stroke-linejoin="round"/><rect x="1926.9" y="259.6" width="2.3" height="8" fill="#1b1f23"/><rect x="1926.9" y="269.4" width="2.3" height="2.5" fill="#1b1f23"/>
<g fill="none" stroke="#5a646d" stroke-width="2.4"><path d="M2111.2 271.6 H2132.8 L2130 267.6 V260.6 A8 8 0 0 0 2114 260.6 V267.6 Z" stroke-linejoin="round"/><path d="M2119.4 274.8 A2.7 2.7 0 0 0 2124.6 274.8"/></g></svg>
<span id="r_tab1" class="t" style="left:1775.00px;top:250.90px;font-size:26px;line-height:26px;color:#2b70d6;letter-spacing:-0.742px;">Settings</span>
<span id="r_tab2" class="t" style="left:1951.80px;top:250.90px;font-size:26px;line-height:26px;color:#5a646d;letter-spacing:-1.342px;">Advanced</span>
<span id="r_tab3" class="t" style="left:2144.60px;top:250.90px;font-size:26px;line-height:26px;color:#5a646d;letter-spacing:-0.500px;">Job Notifications</span>
<span id="r_gen" class="t" style="left:1743.20px;top:361.21px;font-size:32px;line-height:32px;color:#1b1f23;letter-spacing:-0.633px;">General</span>
<span id="r_l1" class="t" style="left:1743.20px;top:433.30px;font-size:28px;line-height:28px;color:#5a646d;letter-spacing:0.416px;">Execution Mode</span>
<div style="position:absolute;left:1744.4px;top:474px;width:999.2px;height:63px;border:2px solid #737c85;border-radius:8px;background:#fff;"></div>
<svg style="position:absolute;left:0px;top:0px;overflow:visible;" width="1" height="1" viewBox="0 0 1 1"><path d="M2702.2 505 H2722 L2712.1 515 Z" fill="#5a646d"/></svg>
<span id="r_v1" class="t" style="left:1761.60px;top:494.20px;font-size:28px;line-height:28px;color:#1b1f23;letter-spacing:-0.274px;">SESSION - Job runs in shared Session Cluster with current Session</span>
<span id="r_l2" class="t" style="left:1744.20px;top:576.82px;font-size:28px;line-height:28px;color:#5a646d;letter-spacing:0.533px;">Job Parallelism (threads)</span>
<div style="position:absolute;left:1744.4px;top:618px;width:999.2px;height:63.5px;border:2px solid #737c85;border-radius:8px;background:#fff;"></div>
<svg style="position:absolute;left:0px;top:0px;overflow:visible;" width="1" height="1" viewBox="0 0 1 1"><rect x="2701.6" y="636.1999999999999" width="19" height="27.2" rx="5" fill="#fff" stroke="#e3e5e8" stroke-width="1"/><g fill="none" stroke="#1b1f23" stroke-width="2"><path d="M2707.2 646.1999999999999 L2711.1 642.1999999999999 L2715 646.1999999999999"/><path d="M2707.2 653.5999999999999 L2711.1 657.5999999999999 L2715 653.5999999999999"/></g></svg>
<span id="r_v2" class="t" style="left:1761.40px;top:636.72px;font-size:28px;line-height:28px;color:#1b1f23;">1</span>
<span id="r_l3" class="t" style="left:1743.20px;top:722.62px;font-size:28px;line-height:28px;color:#5a646d;letter-spacing:0.066px;">Restore From Savepoint</span>
<div style="position:absolute;left:2065.8px;top:714.2px;width:75.6px;height:43.6px;border-radius:22px;background:#d6d8dd;border:2px solid #8a9199;"></div><div style="position:absolute;left:2070.8px;top:720.2px;width:31.6px;height:31.6px;border-radius:50%;background:#fcfcfc;box-shadow:0 1px 2px rgba(0,0,0,0.3);"></div>
<div style="position:absolute;left:1710px;top:788px;width:1132px;height:542px;border:10px solid #5fcbb9;"></div>
<span id="r_samp" class="t" style="left:1743.20px;top:820.77px;font-size:32px;line-height:32px;color:#1b1f23;letter-spacing:-0.020px;">Sample</span>
<span id="r_l4" class="t" style="left:1744.20px;top:892.72px;font-size:28px;line-height:28px;color:#5a646d;letter-spacing:0.091px;">Sample Count</span>
<svg style="position:absolute;left:0px;top:0px;overflow:visible;" width="1" height="1" viewBox="0 0 1 1"><circle cx="1947.9" cy="906.6" r="12" fill="none" stroke="#5a646d" stroke-width="2.4"/><rect x="1946.6000000000001" y="904.0" width="2.6" height="9.2" fill="#5a646d"/><rect x="1946.6000000000001" y="899.4" width="2.6" height="2.8" fill="#5a646d"/></svg>
<div style="position:absolute;left:1736px;top:926px;width:1015.6px;height:80px;background:#9ccbf9;border-radius:14px;"></div>
<div style="position:absolute;left:1744.4px;top:934px;width:999.2px;height:64px;border:2.6px solid #2b70d6;border-radius:8px;background:#fff;"></div>
<svg style="position:absolute;left:0px;top:0px;overflow:visible;" width="1" height="1" viewBox="0 0 1 1"><rect x="2701.6" y="952.4" width="19" height="27.2" rx="5" fill="#fff" stroke="#e3e5e8" stroke-width="1"/><g fill="none" stroke="#1b1f23" stroke-width="2"><path d="M2707.2 962.4 L2711.1 958.4 L2715 962.4"/><path d="M2707.2 969.8 L2711.1 973.8 L2715 969.8"/></g></svg>
<span id="r_v4" class="t" style="left:1761.40px;top:952.72px;font-size:28px;line-height:28px;color:#1b1f23;letter-spacing:0.200px;">10</span>
<div style="position:absolute;left:2775.8px;top:943.8px;width:44.4px;height:44.4px;border:2px solid #ee8a3c;border-radius:50%;background:#fef1e6;"></div>
<svg style="position:absolute;left:0px;top:0px;overflow:visible;" width="1" height="1" viewBox="0 0 1 1"><g transform="translate(2797.8 966.4) rotate(45)"><path d="M-3 -9.6 H3 V9.4 L1.4 12.6 H-1.4 L-3 9.4 Z" fill="#3a1406"/><rect x="-3" y="-14.2" width="6" height="3.2" rx="0.8" fill="#3a1406"/></g></svg>
<span id="r_l5" class="t" style="left:1744.20px;top:1037.12px;font-size:28px;line-height:28px;color:#5a646d;letter-spacing:0.077px;">Sample Window Size</span>
<svg style="position:absolute;left:0px;top:0px;overflow:visible;" width="1" height="1" viewBox="0 0 1 1"><circle cx="2034" cy="1051" r="12" fill="none" stroke="#5a646d" stroke-width="2.4"/><rect x="2032.7" y="1048.4" width="2.6" height="9.2" fill="#5a646d"/><rect x="2032.7" y="1043.8" width="2.6" height="2.8" fill="#5a646d"/></svg>
<div style="position:absolute;left:1744.4px;top:1078.8px;width:999.2px;height:62.8px;border:2px solid #737c85;border-radius:8px;background:#fff;"></div>
<svg style="position:absolute;left:0px;top:0px;overflow:visible;" width="1" height="1" viewBox="0 0 1 1"><rect x="2701.6" y="1096.4" width="19" height="27.2" rx="5" fill="#fff" stroke="#e3e5e8" stroke-width="1"/><g fill="none" stroke="#1b1f23" stroke-width="2"><path d="M2707.2 1106.4 L2711.1 1102.4 L2715 1106.4"/><path d="M2707.2 1113.8 L2711.1 1117.8 L2715 1113.8"/></g></svg>
<span id="r_v5" class="t" style="left:1761.40px;top:1096.72px;font-size:28px;line-height:28px;color:#1b1f23;letter-spacing:0.300px;">100</span>
<span id="r_l6" class="t" style="left:1744.20px;top:1181.02px;font-size:28px;line-height:28px;color:#5a646d;letter-spacing:0.015px;">Sample Behavior</span>
<div style="position:absolute;left:1744.4px;top:1222.4px;width:999.2px;height:63.4px;border:2px solid #737c85;border-radius:8px;background:#fff;"></div>
<svg style="position:absolute;left:0px;top:0px;overflow:visible;" width="1" height="1" viewBox="0 0 1 1"><path d="M2702.2 1252.6 H2722 L2712.1 1262.6 Z" fill="#5a646d"/></svg>
<span id="r_v6" class="t" style="left:1762.00px;top:1242.70px;font-size:28px;line-height:28px;color:#1b1f23;letter-spacing:-0.194px;">Sample one message every second</span>
<span id="r_chk" class="t" style="left:1743.20px;top:1348.77px;font-size:32px;line-height:32px;color:#1b1f23;letter-spacing:0.021px;">Checkpoint</span>
<span id="r_l7" class="t" style="left:1743.20px;top:1422.32px;font-size:28px;line-height:28px;color:#5a646d;letter-spacing:0.221px;">Enable Checkpointing</span>
<div style="position:absolute;left:2037.2px;top:1414.4px;width:75.6px;height:43.6px;border-radius:22px;background:#d6d8dd;border:2px solid #8a9199;"></div><div style="position:absolute;left:2042.2px;top:1420.4px;width:31.6px;height:31.6px;border-radius:50%;background:#fcfcfc;box-shadow:0 1px 2px rgba(0,0,0,0.3);"></div>
</div>
<div style="position:absolute;left:0px;top:1650px;width:3354px;height:80px;background:radial-gradient(ellipse 1080px 80px at 1480px 90px, rgba(0,0,0,0.22), rgba(0,0,0,0.09) 55%, rgba(0,0,0,0) 100%);pointer-events:none;"></div><svg style="position:absolute;left:0px;top:1706px;overflow:visible;" width="24" height="24" viewBox="0 0 24 24"><path d="M0 8 A22 22 0 0 0 6.9 24 L0 24 Z" fill="#7a6a66"/><path d="M0 8 A22 22 0 0 0 6.9 24" fill="none" stroke="#2a2222" stroke-width="1.1"/></svg><div style="position:absolute;left:0px;top:0px;width:1px;height:1714px;background:rgba(255,255,255,0.2);"></div><svg style="position:absolute;left:3350px;top:1726px;overflow:visible;" width="4" height="4" viewBox="0 0 4 4"><path d="M4 1.2 A2.8 2.8 0 0 1 1.2 4 H4 Z" fill="#1a1a1a"/></svg>
</div></body></html>
